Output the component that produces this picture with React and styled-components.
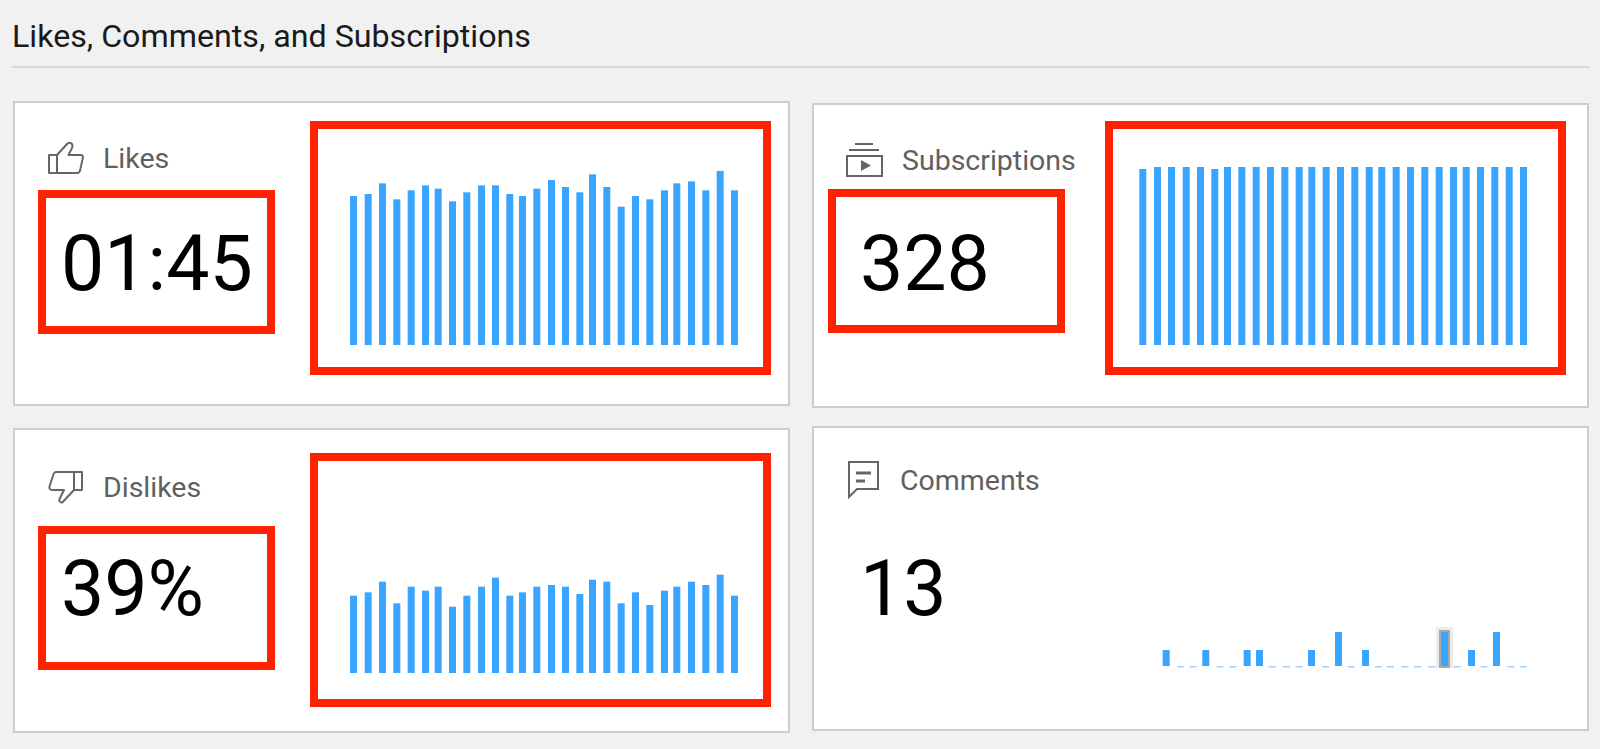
import React from 'react';
import styled, { createGlobalStyle } from 'styled-components';

const GlobalStyle = createGlobalStyle`
  html, body {
    margin: 0;
    height: 749px;
    overflow: hidden;
    background: #f1f1f1;
    font-family: Roboto, "Liberation Sans", sans-serif;
  }
`;

const Page = styled.div`
  width: 1600px;
  height: 749px;
  padding: 0 10px 0 12px;
  box-sizing: border-box;
`;

const Title = styled.h1`
  margin: 0;
  height: 68px;
  box-sizing: border-box;
  padding-top: 18px;
  border-bottom: 2px solid #d8d8d8;
  font-size: 32.2px;
  line-height: 37px;
  font-weight: 400;
  color: #1a1a1a;
`;

const Columns = styled.div`
  display: grid;
  grid-template-columns: 777px 777px;
  column-gap: 22px;
  margin-left: 1px;
`;

const Column = styled.div`
  display: flex;
  flex-direction: column;
  padding-top: ${(p) => p.$top}px;
  gap: ${(p) => p.$gap}px;
`;

const Card = styled.section`
  display: flex;
  align-items: flex-start;
  height: 305px;
  box-sizing: border-box;
  padding: ${(p) => p.$top}px 0 0 ${(p) => p.$left}px;
  gap: ${(p) => p.$gap}px;
  background: #fff;
  border: 2px solid #cdcdcd;
`;

const Summary = styled.div`
  width: 237px;
  flex: none;
`;

const Header = styled.div`
  display: flex;
  align-items: center;
  height: 40px;
  margin: ${(p) => p.$top}px 0 ${(p) => p.$bottom}px ${(p) => p.$left}px;
  gap: ${(p) => p.$gap}px;
  white-space: nowrap;

  svg {
    flex: none;
  }
`;

const Label = styled.span`
  font-size: 28.5px;
  line-height: 40px;
  padding-top: 2px;
  color: #606060;
`;

const ValueBox = styled.div`
  height: 144px;
  box-sizing: border-box;
  border: 8px solid ${(p) => (p.$marked ? '#ff2200' : 'transparent')};
  padding: ${(p) => p.$top}px 0 0 ${(p) => p.$left}px;
  font-size: 77px;
  line-height: 56px;
  font-weight: 400;
  color: #000;
`;

const ChartBox = styled.div`
  width: 461px;
  height: 254px;
  flex: none;
  box-sizing: border-box;
  border: 8px solid ${(p) => (p.$marked ? '#ff2200' : 'transparent')};

  svg {
    display: block;
  }
`;

const likesX = [147, 191, 234, 277, 320, 363, 401, 444, 487, 531, 573, 616, 654, 697, 741, 783, 826, 864, 907, 950, 993, 1036, 1080, 1117, 1161, 1204, 1247, 1290];
const subsX = [118, 162, 204, 248, 291, 334, 372, 415, 458, 501, 544, 587, 625, 668, 711, 754, 797, 835, 878, 921, 964, 1007, 1050, 1088, 1131, 1174, 1217, 1260];
const commentsX = [38, 81, 119, 157, 200, 238, 281, 318, 356, 399, 437, 474, 517, 555, 593, 636, 674, 711, 754, 792, 835, 873, 911, 954, 992, 1029, 1072, 1110];

const likesTops = [258, 252, 220, 268, 241, 226, 236, 274, 247, 226, 226, 252, 258, 236, 210, 231, 247, 193, 231, 290, 258, 268, 241, 220, 214, 241, 183, 241];
const dislikesTops = [438, 428, 396, 461, 411, 423, 411, 471, 438, 411, 384, 438, 428, 411, 406, 411, 433, 390, 396, 461, 428, 466, 423, 411, 396, 406, 375, 438];

// offsets below are read off 3x crops, so everything gets divided by 3
const likesBars = likesX.map((x, i) => ({ x: x / 3 + 300 - 317, h: (705 - likesTops[i]) / 3 }));
const dislikesBars = likesX.map((x, i) => ({ x: x / 3 + 300 - 317, h: (670 - dislikesTops[i]) / 3 }));
const subsBars = subsX.map((x, i) => ({ x: x / 3 + 1100 - 1113, h: i === 0 || i === 5 ? 176 : 178 }));

// 0 means no comments that day, drawn as a small dash under the baseline
const commentHeights = [16, 0, 0, 16, 0, 0, 16, 16, 0, 0, 0, 16, 0, 34, 0, 16, 0, 0, 0, 0, 0, 34, 0, 16, 0, 34, 0, 0];
const commentBars = commentsX.map((x, i) => ({
  x: x / 3 + 1150 - 1113,
  h: commentHeights[i],
  active: i === 21,
}));

function BarChart({ bars, bottom }) {
  return (
    <svg width="445" height="238" viewBox="0 0 445 238">
      {bars.map((bar) => (
        <g key={bar.x}>
          {bar.active && (
            <>
              <rect x={bar.x - 5} y={bottom - bar.h - 5} width={17} height={bar.h + 7} fill="#ececec" />
              <rect x={bar.x - 2} y={bottom - bar.h - 2} width={11} height={bar.h + 4} fill="#a8a8a8" />
            </>
          )}
          {bar.h === 0 ? (
            <rect x={bar.x} y={bottom} width="7" height="1.5" fill="#9fd0ff" />
          ) : (
            <rect x={bar.x} y={bottom - bar.h} width="7" height={bar.h} fill="#3aa5ff" />
          )}
        </g>
      ))}
    </svg>
  );
}

const iconProps = { fill: 'none', stroke: '#666', strokeWidth: 2, strokeLinejoin: 'round' };

const LikeIcon = () => (
  <svg width="36" height="33" viewBox="0 0 36 33" {...iconProps}>
    <path d="M1 13h8v18H1z" />
    <path d="M9 13 19.5 1.5c2-1.4 5-.6 5 2.4 0 3-3 6-4 9.1h12.4c1.5 0 2.3 1.2 2 2.6l-3 13.5c-.3 1.2-1.2 1.9-2.4 1.9H9" />
  </svg>
);

const DislikeIcon = () => (
  <svg width="36" height="34" viewBox="0 0 36 34" {...iconProps}>
    <path d="M26 2h8v18h-8z" />
    <path d="M26 2H8C6.5 2 6 2.8 5.600 4L1.500 16.500C1 18.500 2 20 4 20h12l-4.500 9c-.8 2 .5 4 3 3.200L26 20" />
  </svg>
);

const SubscriptionsIcon = () => (
  <svg width="37" height="34" viewBox="0 0 37 34" fill="none" stroke="#666" strokeWidth="2">
    <path d="M9 1h18M3 7h30" />
    <rect x="1" y="13" width="35" height="20" />
    <path d="M15 17v11l10-5.500z" fill="#666" stroke="none" />
  </svg>
);

const CommentsIcon = () => (
  <svg width="32" height="38" viewBox="0 0 32 38" fill="none" stroke="#666" strokeWidth="2">
    <path d="M1 1h29v27H9L1 36z" />
    <path d="M8 12h15" strokeWidth="3" />
    <path d="M8 20h9" strokeWidth="3" />
  </svg>
);

function App() {
  return (
    <Page>
      <GlobalStyle />
      <Title>Likes, Comments, and Subscriptions</Title>
      <Columns>
        <Column $top={33} $gap={22}>
          <Card $top={18} $left={23} $gap={35}>
            <Summary>
              <Header $top={17} $bottom={12} $left={10} $gap={19}>
                <LikeIcon />
                <Label>Likes</Label>
              </Header>
              <ValueBox $marked $top={38} $left={15}>01:45</ValueBox>
            </Summary>
            <ChartBox $marked>
              <BarChart bars={likesBars} bottom={216} />
            </ChartBox>
          </Card>
          <Card $top={23} $left={23} $gap={35}>
            <Summary>
              <Header $top={14} $bottom={19} $left={10} $gap={19}>
                <DislikeIcon />
                <Label>Dislikes</Label>
              </Header>
              <ValueBox $marked $top={27} $left={15}>39%</ValueBox>
            </Summary>
            <ChartBox $marked>
              <BarChart bars={dislikesBars} bottom={212} />
            </ChartBox>
          </Card>
        </Column>
        <Column $top={35} $gap={18}>
          <Card $top={16} $left={14} $gap={40}>
            <Summary>
              <Header $top={19} $bottom={9} $left={18} $gap={19}>
                <SubscriptionsIcon />
                <Label>Subscriptions</Label>
              </Header>
              <ValueBox $marked $top={39} $left={24}>328</ValueBox>
            </Summary>
            <ChartBox $marked>
              <BarChart bars={subsBars} bottom={216} />
            </ChartBox>
          </Card>
          <Card $top={18} $left={14} $gap={40}>
            <Summary>
              <Header $top={14} $bottom={26} $left={20} $gap={20}>
                <CommentsIcon />
                <Label>Comments</Label>
              </Header>
              <ValueBox $top={27} $left={24}>13</ValueBox>
            </Summary>
            <ChartBox>
              <BarChart bars={commentBars} bottom={212} />
            </ChartBox>
          </Card>
        </Column>
      </Columns>
    </Page>
  );
}

export default App;
